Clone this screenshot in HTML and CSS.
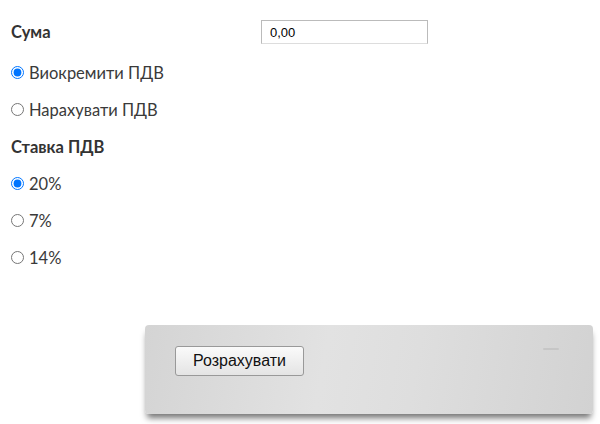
FILE: index.html
```html
<!DOCTYPE html>
<html lang="uk">
<head>
<meta charset="utf-8">
<link rel="stylesheet" href="styles.css">
</head>
<body>
<div class="form">
  <div class="row field-row">
    <span class="label">Сума</span>
    <input class="amount" type="text" value="0,00">
  </div>
  <label class="row radio"><input type="radio" name="mode" checked><span>Виокремити ПДВ</span></label>
  <label class="row radio"><input type="radio" name="mode"><span>Нарахувати ПДВ</span></label>
  <div class="row"><span class="label">Ставка ПДВ</span></div>
  <label class="row radio"><input type="radio" name="rate" checked><span>20%</span></label>
  <label class="row radio"><input type="radio" name="rate"><span>7%</span></label>
  <label class="row radio"><input type="radio" name="rate"><span>14%</span></label>
</div>
<div class="panel">
  <button class="calc" type="button">Розрахувати</button>
  <span class="dash"></span>
</div>
</body>
</html>
```
FILE: styles.css
```css
html, body { margin: 0; padding: 0; background: #fff; }
body {
  font-family: Lato, "Open Sans", sans-serif;
  font-size: 16.5px;
  color: #3a3a3a;
  padding-bottom: 12px;
}
.form {
  padding: 17px 0 0 11px;
  display: flex;
  flex-direction: column;
}
.row {
  height: 37px;
  display: flex;
  align-items: center;
}
.field-row { height: 30px; margin-bottom: 7px; }
.label { font-weight: bold; width: 250px; color: #333; }
.amount {
  width: 167px;
  height: 24px;
  box-sizing: border-box;
  border: 1px solid #bbb;
  border-bottom-color: #ddd;
  font-family: Arial, "Liberation Sans", sans-serif;
  font-size: 13px;
  padding: 2px 8px;
  color: #000;
}
.radio input { margin: 0 5px 0 0; width: 13px; height: 13px; }
.radio span { color: #3a3a3a; }
.panel {
  margin: 49px 0 0 145px;
  width: 448px;
  height: 89px;
  border-radius: 4px;
  background: linear-gradient(100deg, #d4d4d4 0%, #e2e2e2 40%, #dedede 60%, #d2d2d2 100%);
  box-shadow: 0 6px 6px -2px rgba(0,0,0,0.55);
  position: relative;
  box-sizing: border-box;
  padding: 21px 0 0 30px;
}
.calc {
  width: 129px;
  height: 30px;
  border: 1px solid #999;
  border-radius: 3px;
  background: linear-gradient(#fafafa, #e4e4e4);
  font-family: Arial, "Liberation Sans", sans-serif;
  font-size: 16px;
  color: #111;
  padding: 0;
}
.dash {
  position: absolute;
  right: 34px;
  top: 23px;
  width: 16px;
  height: 2px;
  background: #c6c6c6;
  border-radius: 1px;
}
```
